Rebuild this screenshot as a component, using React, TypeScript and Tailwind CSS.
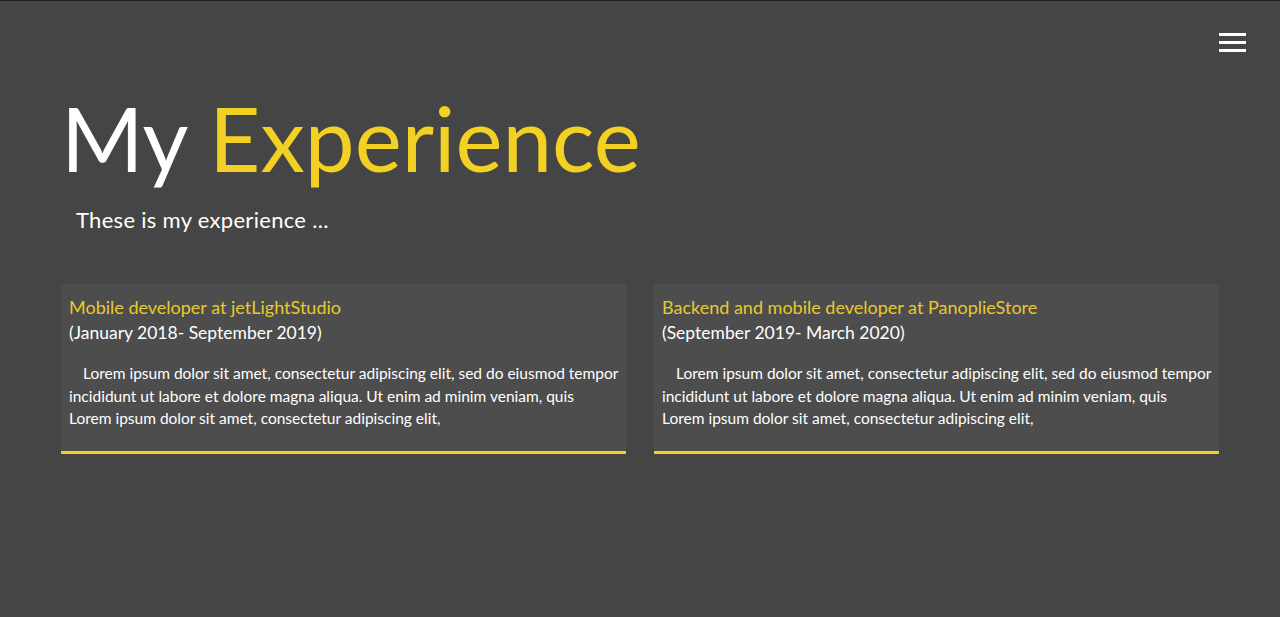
export default function App() {
  const jobs = [
    {
      title: "Mobile developer at jetLightStudio",
      period: "(January 2018- September 2019)",
    },
    {
      title: "Backend and mobile developer at PanoplieStore",
      period: "(September 2019- March 2020)",
    },
  ];
  const body =
    "Lorem ipsum dolor sit amet, consectetur adipiscing elit, sed do eiusmod tempor incididunt ut labore et dolore magna aliqua. Ut enim ad minim veniam, quis Lorem ipsum dolor sit amet, consectetur adipiscing elit,";

  return (
    <div
      className="min-h-[617px] border-t border-[#1e1e1e] bg-[#454545] text-white"
      style={{ fontFamily: 'Lato, "Open Sans", sans-serif' }}
    >
      <div className="flex justify-end pr-[34px] pt-[32px]">
        <button type="button" aria-label="Menu" className="flex w-[27px] flex-col gap-[5px]">
          <span className="h-[3px] w-full bg-white" />
          <span className="h-[3px] w-full bg-white" />
          <span className="h-[3px] w-full bg-white" />
        </button>
      </div>

      <div className="px-[61px]">
        <h1 className="mt-[38px] text-[89px] font-normal leading-[96px]">
          My <span className="text-[#f2d024]">Experience</span>
        </h1>
        <p className="mt-[20px] pl-[15px] text-[22px] leading-[28px] tracking-[0.3px]">These is my experience ...</p>

        <div className="mt-[50px] grid grid-cols-2 gap-[28px]">
          {jobs.map((job) => (
            <div key={job.title} className="h-[170px] border-b-[3px] border-[#f2d024] bg-[#4d4d4d] pl-[8px] pr-[6px] pt-[11px]">
              <h3 className="text-[18px] leading-[24px] text-[#e8c92c]">{job.title}</h3>
              <p className="text-[17.5px] leading-[28px]">{job.period}</p>
              <p className="mt-[15px] indent-[14px] text-[15.5px] leading-[22.5px]">{body}</p>
            </div>
          ))}
        </div>
      </div>
    </div>
  );
}
